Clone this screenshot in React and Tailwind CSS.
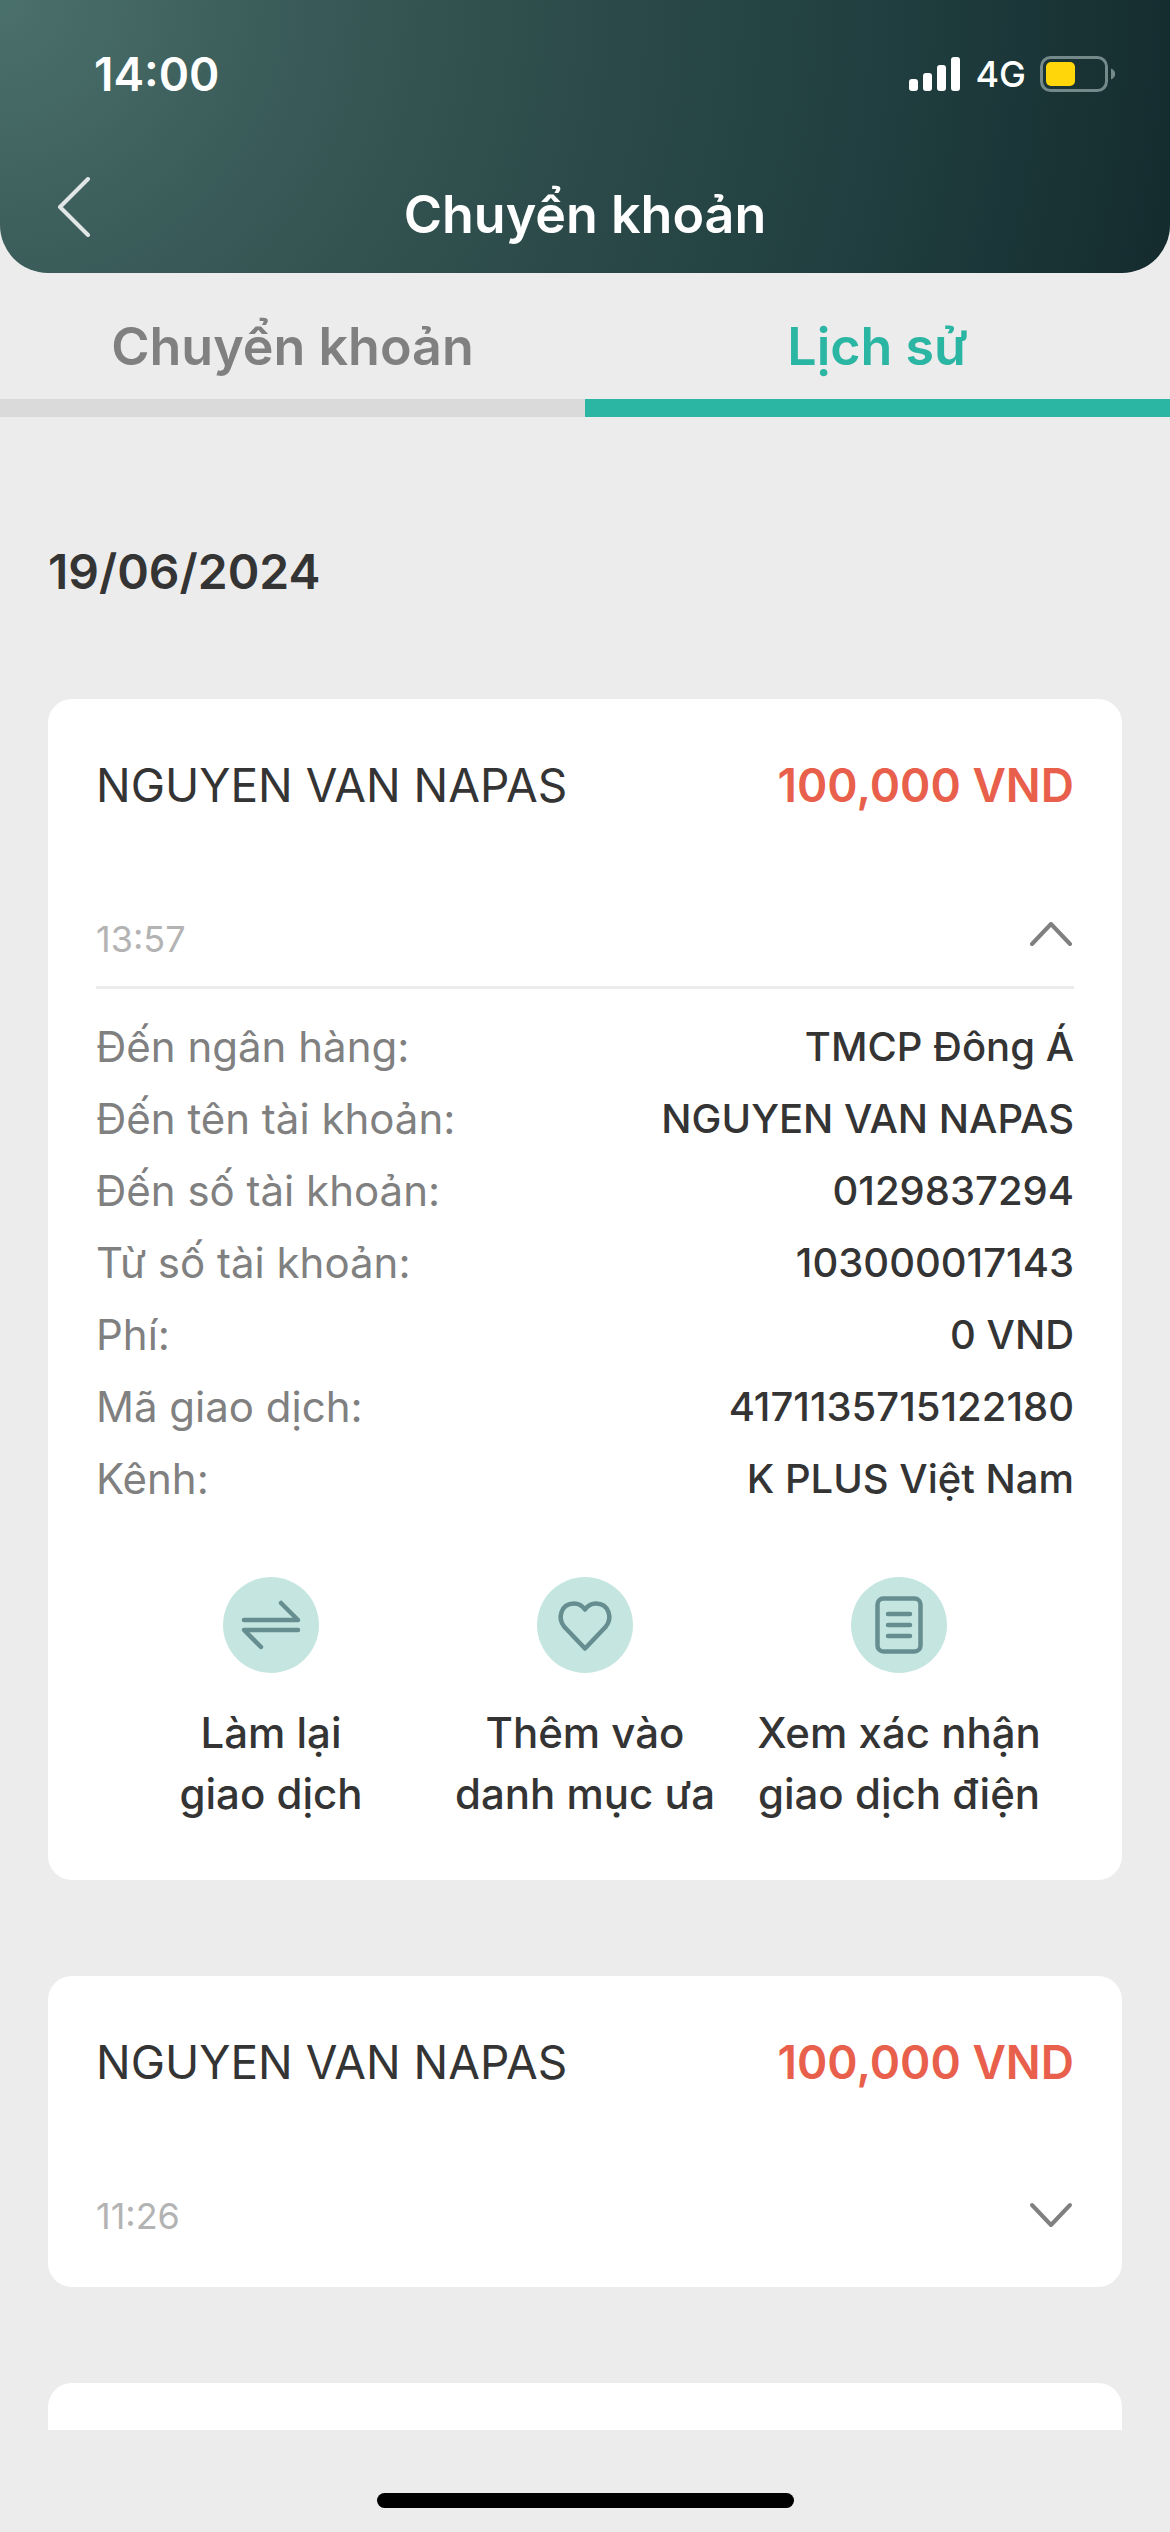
import { useState } from "react"

const transactions = [
  {
    id: 1,
    name: "NGUYEN VAN NAPAS",
    amount: "100,000 VND",
    time: "13:57",
    details: [
      { label: "Đến ngân hàng:", value: "TMCP Đông Á" },
      { label: "Đến tên tài khoản:", value: "NGUYEN VAN NAPAS" },
      { label: "Đến số tài khoản:", value: "0129837294" },
      { label: "Từ số tài khoản:", value: "103000017143" },
      { label: "Phí:", value: "0 VND" },
      { label: "Mã giao dịch:", value: "4171135715122180" },
      { label: "Kênh:", value: "K PLUS Việt Nam" },
    ],
  },
  { id: 2, name: "NGUYEN VAN NAPAS", amount: "100,000 VND", time: "11:26", details: [] },
]

export default function App() {
  const [tab, setTab] = useState("history")
  const [openId, setOpenId] = useState(1)

  return (
    <div className="flex h-screen flex-col bg-[#ececec] font-['Inter',sans-serif] text-[#343434]">
      <header className="shrink-0 rounded-b-[48px] bg-[radial-gradient(circle_at_top_left,#4b716c_0%,#395a58_25%,#2b4a49_50%,#203e3f_75%,#142b2e_100%)] text-white">
        <StatusBar />
        <div className="grid grid-cols-[120px_1fr_120px] items-start pb-5">
          <button aria-label="Quay lại" className="justify-self-start pl-14">
            <svg width="36" height="60" viewBox="0 0 36 60" fill="none" stroke="#e0e5e5" strokeWidth="4" strokeLinecap="round" strokeLinejoin="round">
              <path d="M32 2 4 30l28 28" />
            </svg>
          </button>
          <h1 className="text-center text-[52px] leading-[76px] font-semibold">Chuyển khoản</h1>
        </div>
      </header>

      <nav className="grid shrink-0 grid-cols-2">
        <Tab label="Chuyển khoản" active={tab === "transfer"} onClick={() => setTab("transfer")} />
        <Tab label="Lịch sử" active={tab === "history"} onClick={() => setTab("history")} />
      </nav>

      <main className="flex min-h-0 flex-1 flex-col gap-24 overflow-hidden px-12 pt-[124px]">
        <h2 className="shrink-0 text-[48px] leading-[62px] font-semibold">19/06/2024</h2>
        {transactions.map((t) => (
          <TransactionCard
            key={t.id}
            transaction={t}
            open={openId === t.id}
            onToggle={() => setOpenId(openId === t.id ? null : t.id)}
          />
        ))}
        <div className="min-h-[311px] shrink-0 rounded-3xl bg-white" />
      </main>

      <footer className="flex h-[102px] shrink-0 items-end justify-center pb-6">
        <div className="h-[15px] w-[417px] rounded-full bg-black" />
      </footer>
    </div>
  )
}

function StatusBar() {
  return (
    <div className="flex h-[177px] items-start justify-between pt-[46px] pr-[54px] pl-[94px]">
      <span className="text-[46px] leading-[56px] font-semibold">14:00</span>
      <div className="flex h-14 items-center gap-[14px]">
        <svg width="52" height="34" viewBox="0 0 52 34" fill="#fff">
          <rect x="0" y="22" width="9" height="12" rx="3" />
          <rect x="14" y="16" width="9" height="18" rx="3" />
          <rect x="28" y="8" width="9" height="26" rx="3" />
          <rect x="42" y="0" width="9" height="34" rx="3" />
        </svg>
        <span className="text-[36px] leading-[56px] font-medium">4G</span>
        <svg width="76" height="36" viewBox="0 0 76 36" fill="none">
          <rect x="1.5" y="1.5" width="65" height="33" rx="9" stroke="#73898a" strokeWidth="3" />
          <rect x="6" y="6" width="29" height="24" rx="5" fill="#ffd60a" />
          <path d="M71 12.500c5.500 2 5.500 9 0 11z" fill="#73898a" />
        </svg>
      </div>
    </div>
  )
}

function Tab({ label, active, onClick }) {
  return (
    <button
      onClick={onClick}
      className={`border-b-[18px] pt-9 pb-[14px] text-[52px] leading-[76px] font-semibold ${active ? "border-[#2bb5a3] text-[#2bb5a3]" : "border-[#dadada] text-[#808080]"}`}
    >
      {label}
    </button>
  )
}

function TransactionCard({ transaction, open, onToggle }) {
  const { name, amount, time, details } = transaction

  return (
    <section className="shrink-0 rounded-3xl bg-white p-12">
      <div className="flex justify-between text-[46px] leading-[76px]">
        <span>{name}</span>
        <span className="font-semibold text-[#e8604c]">{amount}</span>
      </div>
      <div className="mt-[93px] flex items-center justify-between">
        <span className="text-[36px] leading-[46px] text-[#b3b3b3]">{time}</span>
        <button aria-label={open ? "Thu gọn" : "Mở rộng"} aria-expanded={open} onClick={onToggle}>
          <svg width="46" height="34" viewBox="0 0 46 34" fill="none" stroke="#808080" strokeWidth="4" strokeLinecap="round" strokeLinejoin="round">
            <path d={open ? "M4 22 23 2 42 22" : "M4 6l19 20L42 6"} />
          </svg>
        </button>
      </div>
      {open && (
        <>
          <dl className="mt-6 border-t-[3px] border-[#ececec] pt-[22px] leading-[72px]">
            {details.map((d) => (
              <div key={d.label} className="flex justify-between">
                <dt className="text-[42px] text-[#808080]">{d.label}</dt>
                <dd className="text-[40px] font-medium">{d.value}</dd>
              </div>
            ))}
          </dl>
          <div className="mt-[62px] mb-2 grid grid-cols-3 px-[18px]">
            <Action lines={["Làm lại", "giao dịch"]}>
              <path d="M21 43h54L58 26M75 53H21l17 17" />
            </Action>
            <Action lines={["Thêm vào", "danh mục ưa"]}>
              <path d="M48 71.500 27.500 50C20 41.500 24 26.500 37 26.500c5 0 8.500 2.500 11 6 2.500-3.500 6-6 11-6 13 0 17 15 9.500 23.500z" />
            </Action>
            <Action lines={["Xem xác nhận", "giao dịch điện"]}>
              <rect x="26.500" y="21.500" width="43" height="53" rx="6" />
              <path d="M37 37h22M37 48h22M37 59h22" />
            </Action>
          </div>
        </>
      )}
    </section>
  )
}

function Action({ lines, children }) {
  return (
    <button className="flex flex-col items-center text-[42px] leading-[61px] font-medium whitespace-nowrap">
      <svg width="96" height="96" viewBox="0 0 96 96" fill="none" className="mb-[29px]">
        <circle cx="48" cy="48" r="48" fill="#c5e6e0" />
        <g stroke="#668d90" strokeWidth="4.500" strokeLinecap="round" strokeLinejoin="round">
          {children}
        </g>
      </svg>
      {lines.map((line) => (
        <span key={line}>{line}</span>
      ))}
    </button>
  )
}
